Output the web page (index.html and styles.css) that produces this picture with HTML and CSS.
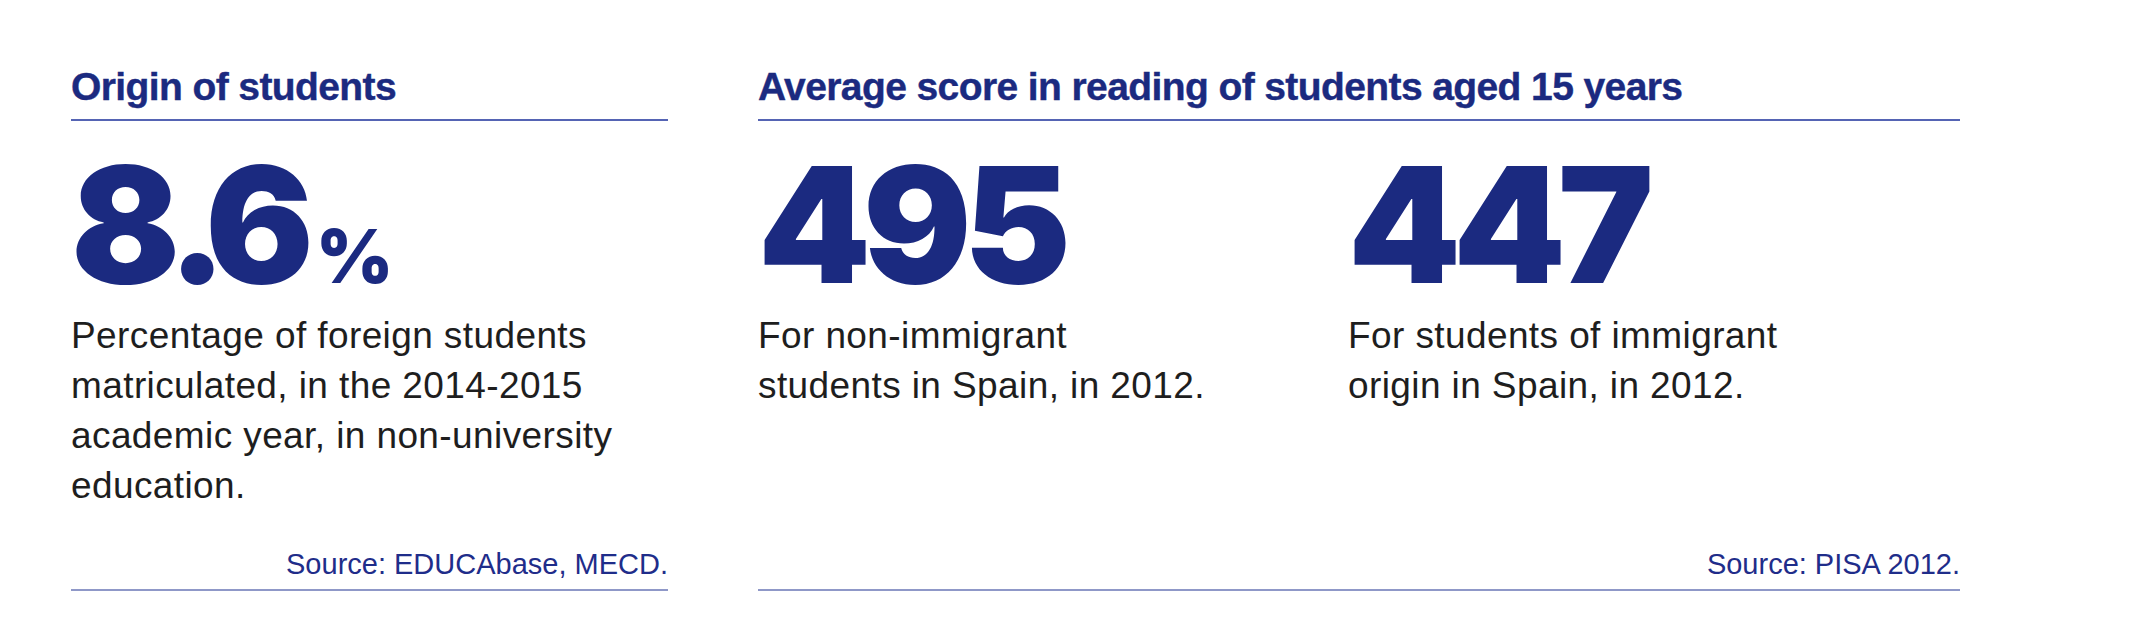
FILE: index.html
```html
<!DOCTYPE html>
<html lang="en">
<head>
<meta charset="utf-8">
<title>Origin of students</title>
<link rel="stylesheet" href="styles.css">
</head>
<body>
<main class="page">
  <section class="panel panel-left">
    <h2 class="heading">Origin of students</h2>
    <div class="stat">
      <div class="figure"><span class="tight-digit">8</span><span class="tight-dot">.</span>6<span class="unit">%</span></div>
      <p class="desc">Percentage of foreign students<br>matriculated, in the 2014-2015<br>academic year, in non-university<br>education.</p>
    </div>
    <p class="source">Source: EDUCAbase, MECD.</p>
  </section>
  <section class="panel panel-right">
    <h2 class="heading">Average score in reading of students aged 15 years</h2>
    <div class="stats">
      <div class="stat">
        <div class="figure">495</div>
        <p class="desc">For non-immigrant<br>students in Spain, in 2012.</p>
      </div>
      <div class="stat">
        <div class="figure">447</div>
        <p class="desc">For students of immigrant<br>origin in Spain, in 2012.</p>
      </div>
    </div>
    <p class="source">Source: PISA 2012.</p>
  </section>
</main>
</body>
</html>
```

FILE: styles.css
```css
html, body {
  margin: 0;
  padding: 0;
  background: #ffffff;
}

body {
  font-family: "Liberation Sans", Arial, sans-serif;
  color: #1e1e1e;
}

.page {
  display: grid;
  grid-template-columns: 597px 1202px;
  column-gap: 90px;
  padding: 63px 0 0 71px;
  align-items: stretch;
}

.panel {
  display: flex;
  flex-direction: column;
}

.heading {
  margin: 0;
  font-family: "Liberation Sans", Arial, sans-serif;
  font-weight: 700;
  font-size: 39px;
  line-height: 48px;
  letter-spacing: -0.6px;
  color: #1b2a80;
  -webkit-text-stroke: 0.4px #1b2a80;
  padding-bottom: 8px;
  border-bottom: 2px solid #5564b4;
}

.stats {
  display: grid;
  grid-template-columns: 590px 1fr;
}

.figure {
  margin-top: 23px;
  font-family: "Inter", "Roboto", "Liberation Sans", sans-serif;
  font-weight: 900;
  font-size: 161px;
  line-height: 161px;
  height: 161px;
  letter-spacing: -8px;
  color: #1b2a80;
  white-space: nowrap;
}

.tight-digit {
  letter-spacing: -13px;
}

.tight-dot {
  letter-spacing: -22px;
}

.unit {
  font-size: 74px;
  line-height: 1;
  letter-spacing: 0;
  margin-left: 10px;
}

.desc {
  margin: 6px 0 0;
  font-size: 37px;
  line-height: 50px;
  letter-spacing: 0.4px;
  color: #1e1e1e;
  white-space: nowrap;
}

.source {
  margin: auto 0 0;
  padding-top: 35px;
  padding-bottom: 7px;
  text-align: right;
  font-size: 29px;
  line-height: 36px;
  color: #1f2d8a;
  border-bottom: 2px solid #8f98c8;
}
```
